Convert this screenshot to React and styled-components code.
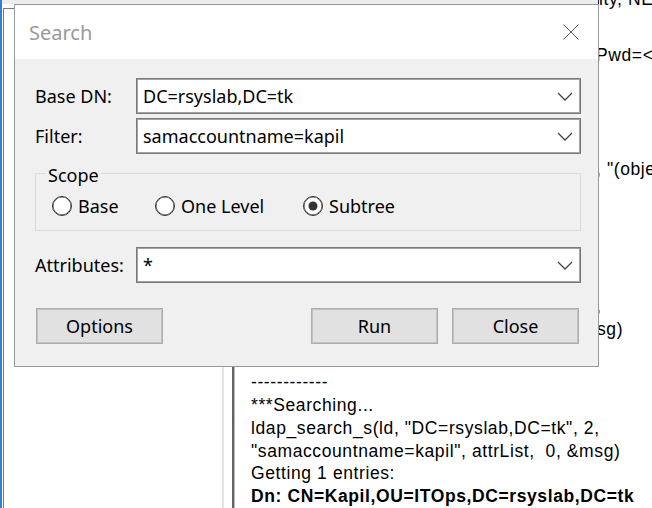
import React from "react";
import styled, { createGlobalStyle } from "styled-components";

const GlobalStyle = createGlobalStyle`
  *, *::before, *::after { box-sizing: border-box; }
  html, body { margin: 0; padding: 0; background: #fff; }
  body { width: 652px; height: 508px; overflow: hidden; }
`;

const Desktop = styled.div`
  position: relative;
  display: flex;
  width: 652px;
  height: 508px;
  overflow: hidden;
  background: #fff;
`;

const LeftWindow = styled.div`
  flex: none;
  width: 224px;
  display: flex;
  border-left: 2px solid #2f7fd6;
  padding-left: 1px;
`;

const LeftFrame = styled.div`
  flex: 1;
  margin-top: 8px;
  border-top: 1px solid #7a7a7a;
  border-left: 1px solid #7a7a7a;
  border-right: 2px solid #e4e4e4;
  background: #fff;
`;

const LogWindow = styled.div`
  flex: 1;
  margin-left: 8px;
  display: flex;
  flex-direction: column;
  border-left: 2px solid #646464;
  box-shadow: inset 1px 0 0 #b8b8b8;
  padding-left: 17px;
  overflow: hidden;
  font-family: "Liberation Sans", Arial, sans-serif;
  font-size: 17.5px;
  letter-spacing: 0.6px;
  line-height: 22.8px;
  color: #000;
`;

const LogLine = styled.div`
  display: flex;
  flex: none;
  height: 22.8px;
  white-space: pre;
  margin-top: ${(p) => p.$gap || 0}px;
  font-weight: ${(p) => (p.$bold ? 700 : 400)};
`;

const Covered = styled.span`
  flex: none;
  width: ${(p) => p.$w}px;
  overflow: hidden;
`;

const Tail = styled.span`
  flex: none;
`;

const TopShade = styled.div`
  position: absolute;
  top: 0;
  left: 2px;
  width: 596px;
  height: 4px;
  background: #ededed;
`;

const Dialog = styled.div`
  position: absolute;
  left: 14px;
  top: 4px;
  width: 585px;
  height: 363px;
  display: flex;
  flex-direction: column;
  border: 1px solid #999;
  background: #f0f0f0;
  font-family: "Noto Sans", "Open Sans", sans-serif;
  font-size: 18px;
  color: #000;
`;

const TitleBar = styled.div`
  flex: none;
  height: 54px;
  display: flex;
  align-items: center;
  justify-content: space-between;
  padding: 0 19px 0 14px;
  background: #fff;
`;

const Title = styled.span`
  font-size: 20px;
  color: #999;
`;

const Body = styled.div`
  flex: 1;
  display: flex;
  flex-direction: column;
  padding: 19px 17px 22px 20px;
`;

const FieldRow = styled.div`
  display: grid;
  grid-template-columns: 101px 1fr;
  align-items: center;
  margin-top: ${(p) => p.$gap || 0}px;
`;

const Label = styled.span`
  white-space: nowrap;
`;

const Combo = styled.div`
  height: 36px;
  display: flex;
  align-items: center;
  justify-content: space-between;
  padding: 0 7px 0 6px;
  background: #fff;
  border: 1px solid #7a7a7a;
  box-shadow: inset 0 0 0 1px #a2a2a2;
`;

const ComboValue = styled.span`
  white-space: nowrap;
`;

const Group = styled.fieldset`
  margin: ${(p) => p.$gap || 0}px 0 0 0;
  padding: 0 0 16px 10px;
  border: 1px solid #dcdcdc;
  min-inline-size: 0;
`;

const Legend = styled.legend`
  padding: 4px 2px 0;
  line-height: 24px;
`;

const RadioRow = styled.div`
  display: grid;
  grid-template-columns: 103px 148px auto;
  align-items: center;
  height: 20px;
  margin: 7px 0 0 6px;
`;

const Radio = styled.label`
  display: flex;
  align-items: center;
  gap: 6px;
  white-space: nowrap;
`;

const RadioCircle = styled.span`
  position: relative;
  flex: none;
  width: 20px;
  height: 20px;
  border-radius: 50%;
  background: #fff;
  border: 1px solid #333;
  box-shadow: inset 0 0 0 0.5px #333;
  &::after {
    content: "";
    display: ${(p) => (p.$checked ? "block" : "none")};
    position: absolute;
    left: 50%;
    top: 50%;
    width: 9px;
    height: 9px;
    transform: translate(-50%, -50%);
    border-radius: 50%;
    background: #333;
  }
`;

const ButtonRow = styled.div`
  display: flex;
  justify-content: space-between;
  margin-top: ${(p) => p.$gap || 0}px;
  padding: 0 2px 0 1px;
`;

const ButtonGroup = styled.div`
  display: flex;
  gap: 14px;
`;

const Button = styled.button`
  width: 127px;
  height: 36px;
  padding: 0;
  font-family: inherit;
  font-size: 18px;
  color: #000;
  background: #e1e1e1;
  border: 1px solid #adadad;
  box-shadow: inset 0 0 0 1px #c2c2c2;
`;

const Chevron = () => (
  <svg width="16" height="9" viewBox="0 0 16 9">
    <polyline points="1,1 8,8 15,1" fill="none" stroke="#444" strokeWidth="1.3" />
  </svg>
);

const CloseIcon = () => (
  <svg width="16" height="16" viewBox="0 0 16 16">
    <line x1="0.5" y1="0.5" x2="15.5" y2="15.5" stroke="#555" strokeWidth="1" />
    <line x1="15.5" y1="0.5" x2="0.5" y2="15.5" stroke="#555" strokeWidth="1" />
  </svg>
);

const ComboField = ({ label, value, gap }) => (
  <FieldRow $gap={gap}>
    <Label>{label}</Label>
    <Combo>
      <ComboValue>{value}</ComboValue>
      <Chevron />
    </Combo>
  </FieldRow>
);

const upper = [
  { covered: "res = ldap_bind_s(ld, NULL, &NtAuthIdent", w: 348, tail: "ity, NEGOTIATE (1158)); // v.3", gap: -12.5 },
  { covered: "    {NtAuthIdentity: User='kapil'; ", w: 345, tail: "Pwd=<unavailable>; domain = 'rsyslab.tk'}", gap: 34.2 },
  { text: "Authenticated as: 'RSYSLAB\\kapil'." },
  { text: "------------" },
  { text: "***Searching..." },
  { text: "Scope: One Level" },
  { covered: 'ldap_search_s(ld, "DC=rsyslab,DC=tk", 1', w: 345, tail: ', "(objectClass=*)", attrList,  0, &msg)' },
  { text: "Getting 3 entries:" },
  { text: "Dn: CN=Builtin,DC=rsyslab,DC=tk" },
  { text: "Dn: CN=Users,DC=rsyslab,DC=tk" },
  { text: "------------" },
  { text: "***Searching..." },
  { covered: 'ldap_search_s(ld, "DC=rsyslab,DC=tk", 2, "cn=kapil"', w: 345, tail: "," },
  { covered: "attrList,  0, &m", w: 346, tail: "sg)" },
  { text: "Getting 0 entries:" },
];

const lower = [
  { text: "------------", gap: 7.5 },
  { text: "***Searching..." },
  { text: 'ldap_search_s(ld, "DC=rsyslab,DC=tk", 2,' },
  { text: '"samaccountname=kapil", attrList,  0, &msg)' },
  { text: "Getting 1 entries:" },
  { text: "Dn: CN=Kapil,OU=ITOps,DC=rsyslab,DC=tk", bold: true },
];

export default function App() {
  const lines = [...upper, ...lower];
  return (
    <Desktop>
      <GlobalStyle />
      <LeftWindow>
        <LeftFrame />
      </LeftWindow>
      <LogWindow>
        {lines.map((l, i) => (
          <LogLine key={i} $gap={l.gap} $bold={l.bold}>
            {l.covered !== undefined ? (
              <>
                <Covered $w={l.w}>{l.covered}</Covered>
                <Tail>{l.tail}</Tail>
              </>
            ) : (
              l.text
            )}
          </LogLine>
        ))}
      </LogWindow>
      <TopShade />
      <Dialog>
        <TitleBar>
          <Title>Search</Title>
          <CloseIcon />
        </TitleBar>
        <Body>
          <ComboField label="Base DN:" value="DC=rsyslab,DC=tk" />
          <ComboField label="Filter:" value="samaccountname=kapil" gap={4} />
          <Group $gap={5}>
            <Legend>Scope</Legend>
            <RadioRow>
              <Radio>
                <RadioCircle />
                Base
              </Radio>
              <Radio>
                <RadioCircle />
                One Level
              </Radio>
              <Radio>
                <RadioCircle $checked />
                Subtree
              </Radio>
            </RadioRow>
          </Group>
          <ComboField label="Attributes:" value="*" gap={16} />
          <ButtonRow $gap={25}>
            <Button>Options</Button>
            <ButtonGroup>
              <Button>Run</Button>
              <Button>Close</Button>
            </ButtonGroup>
          </ButtonRow>
        </Body>
      </Dialog>
    </Desktop>
  );
}
